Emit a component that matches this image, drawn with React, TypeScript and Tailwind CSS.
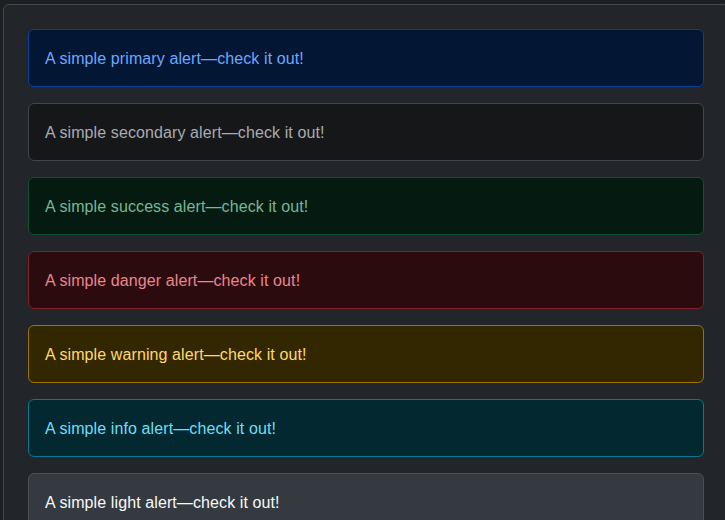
import React from "react";

const alerts = [
  { label: "primary", cls: "bg-[#031633] border-[#084298] text-[#6ea8fe]" },
  { label: "secondary", cls: "bg-[#161719] border-[#41464b] text-[#a7acb1]" },
  { label: "success", cls: "bg-[#051b11] border-[#0f5132] text-[#75b798]" },
  { label: "danger", cls: "bg-[#2c0b0e] border-[#842029] text-[#ea868f]" },
  { label: "warning", cls: "bg-[#332701] border-[#997404] text-[#ffda6a]" },
  { label: "info", cls: "bg-[#032830] border-[#087990] text-[#6edff6]" },
  { label: "light", cls: "bg-[#343a40] border-[#495057] text-[#f8f9fa]" },
];

export default function App() {
  return (
    <div
      className="h-[520px] w-[725px] overflow-hidden bg-[#1d1f22] pl-[3px] pt-[4px]"
      style={{ fontFamily: '"Liberation Sans", Arial, sans-serif' }}
    >
      <div className="w-[726px] min-h-[600px] rounded-md border border-[#45484b] bg-[#222529] p-6">
        <div className="flex flex-col gap-4">
          {alerts.map((a) => (
            <div
              key={a.label}
              className={`rounded-md border px-4 pt-[17px] pb-[15px] text-base leading-6 tracking-[0.1px] ${a.cls}`}
            >
              A simple {a.label} alert—check it out!
            </div>
          ))}
        </div>
      </div>
    </div>
  );
}
